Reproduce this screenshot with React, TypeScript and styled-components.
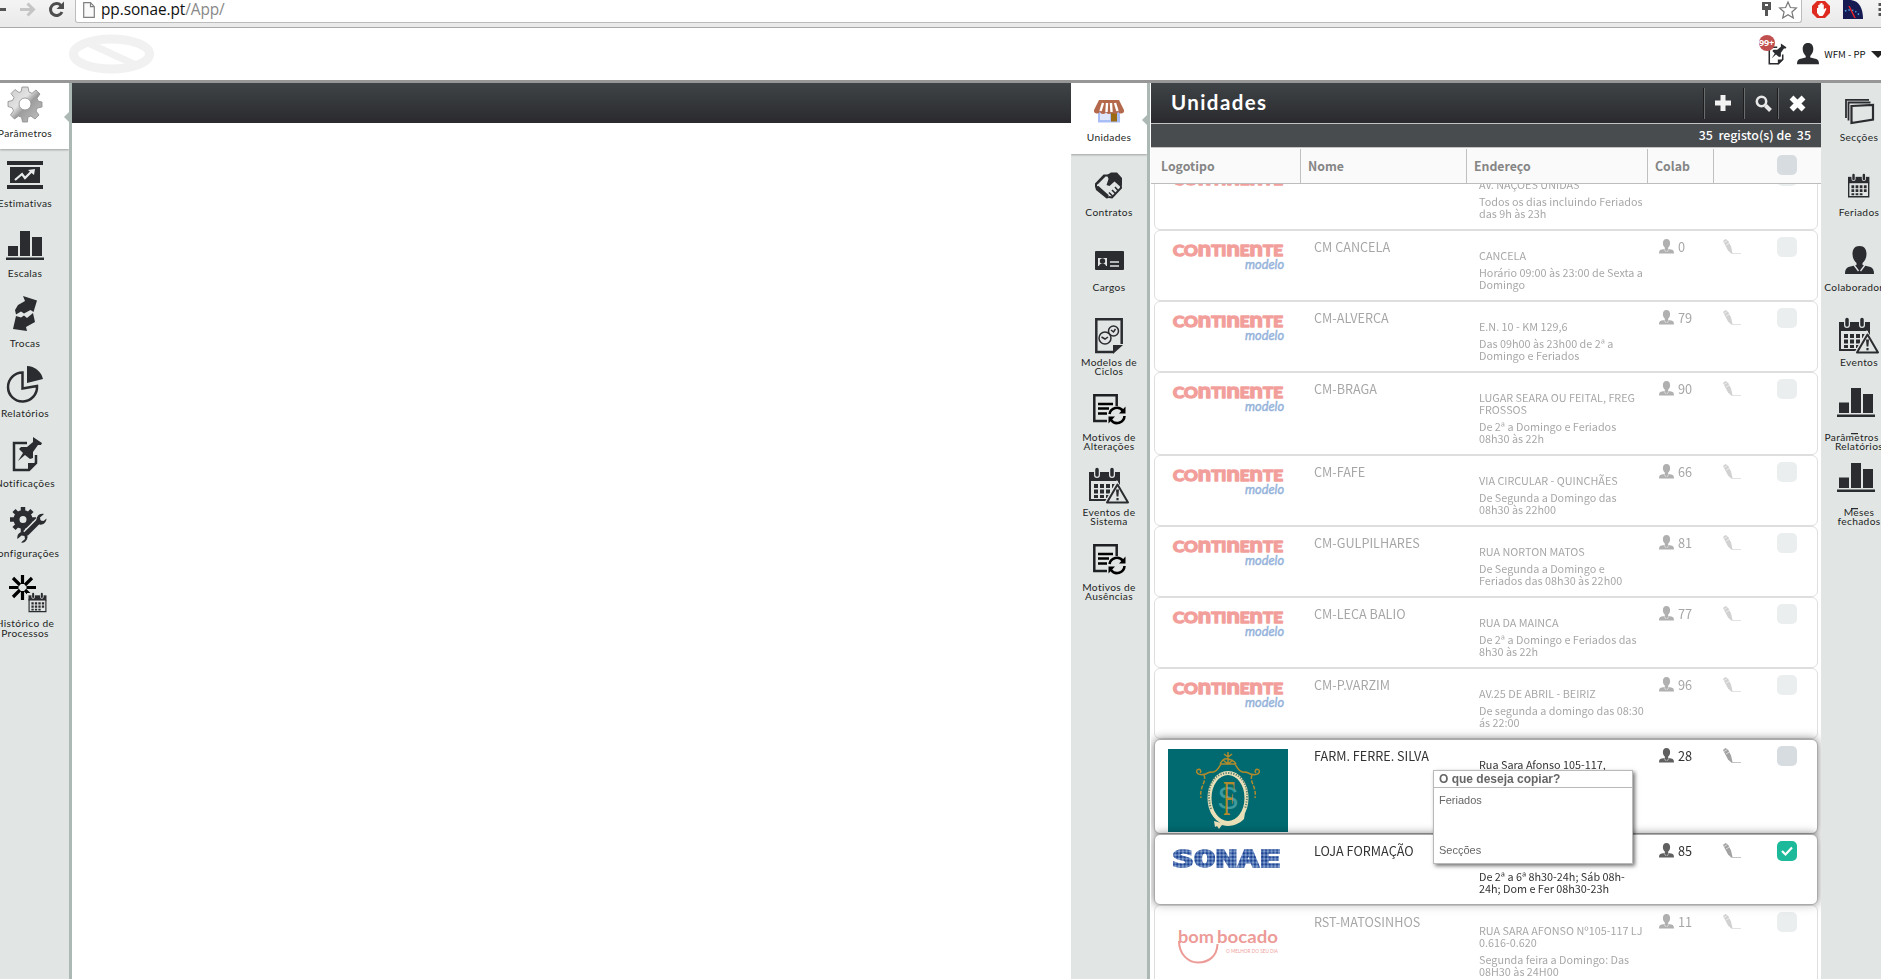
import React from "react";
import styled, { createGlobalStyle } from "styled-components";

const SOURCE = `"Noto Sans CJK SC", "Open Sans", sans-serif`;
const ROUND = `Lato, "Open Sans", sans-serif`;
const INK = "#2b2c30";

const GlobalStyle = createGlobalStyle`
  * { box-sizing: border-box; }
  body { margin: 0; background: #fff; font-family: ${SOURCE}; overflow: hidden; }
  svg { display: block; flex: none; overflow: visible; }
`;

const Page = styled.div`
  display: flex;
  flex-direction: column;
  width: 1881px;
  height: 979px;
  overflow: hidden;
`;

/* ---------- browser chrome ---------- */
const BrowserBar = styled.div`
  display: flex;
  align-items: flex-start;
  height: 28px;
  background: linear-gradient(#f4f4f4, #e9e9e9);
  border-bottom: 1px solid #a9a9a9;
`;
const NavButtons = styled.div`
  flex: none;
  width: 75px;
  height: 22px;
`;
const Omnibox = styled.div`
  display: flex;
  flex: none;
  align-items: center;
  width: 1727px;
  height: 23px;
  padding: 0 4px 3px 7px;
  background: #fff;
  border: 1px solid #bcbcbc;
  border-top: 0;
  border-radius: 0 0 3px 3px;
`;
const Url = styled.span`
  flex: 1;
  margin-left: 6px;
  padding-top: 1px;
  font: 15.4px/20px "Open Sans", sans-serif;
  letter-spacing: -0.08px;
  color: #888;
  b { font-weight: 400; color: #111; }
`;
const Extensions = styled.div`
  display: flex;
  flex: 1;
  gap: 13px;
  min-width: 0;
  padding-left: 10px;
`;

/* ---------- app header ---------- */
const Header = styled.header`
  display: flex;
  justify-content: space-between;
  height: 55px;
  background: #fff;
  border-bottom: 3px solid #979797;
`;
const LogoSlot = styled.div`
  padding: 6px 0 0 68px;
`;
const UserArea = styled.div`
  display: flex;
  align-items: center;
  width: 122px;
`;
const Bell = styled.div`
  position: relative;
  width: 40px;
  height: 52px;
  padding: 15px 0 0 6px;
`;
const Badge = styled.span`
  position: absolute;
  left: 0;
  top: 7px;
  width: 16px;
  height: 16px;
  border-radius: 8px;
  background: #c0504f;
  color: #fff;
  font: 700 9px/15px "Open Sans", sans-serif;
  letter-spacing: -0.2px;
  white-space: nowrap;
`;
const UserName = styled.span`
  width: 49px;
  margin-left: 5px;
  font: 9.600px/14px ${SOURCE};
  color: #111;
  white-space: nowrap;
`;

/* ---------- layout ---------- */
const Body = styled.div`
  display: flex;
  flex: 1;
  min-height: 0;
`;
const Work = styled.main`
  width: 999px;
  background: #fff;
`;
const DarkBar = styled.div`
  display: flex;
  align-items: center;
  height: 40px;
  background: linear-gradient(#3f4447, #2a2a2e);
`;

/* ---------- side menus ---------- */
const Menu = styled.nav<{ $w: number; $edge?: boolean }>`
  width: ${(p) => p.$w}px;
  overflow: hidden;
  background: #e1e6e4;
  border-right: ${(p) => (p.$edge ? "3px solid #abb8b4" : "0")};
`;
const MenuItem = styled.div<{ $h: number; $top: number; $active?: boolean }>`
  position: relative;
  display: flex;
  justify-content: center;
  height: ${(p) => p.$h}px;
  padding-top: ${(p) => p.$top}px;
  background: ${(p) => (p.$active ? "#fff" : "transparent")};
  box-shadow: ${(p) => (p.$active ? "0 1px 2px rgba(0,0,0,.3)" : "none")};
`;
const MenuInner = styled.div<{ $w: number; $shift: number; $gap: number; $lh: number }>`
  display: flex;
  flex: none;
  flex-direction: column;
  align-items: center;
  gap: ${(p) => p.$gap}px;
  width: ${(p) => p.$w}px;
  margin-left: ${(p) => p.$shift}px;
  font: 10.2px/${(p) => p.$lh}px ${ROUND};
  letter-spacing: 0.35px;
  color: #1e1f24;
  text-align: center;
  white-space: pre;
`;
const Notch = styled.i<{ $y: number }>`
  position: absolute;
  right: 0;
  top: ${(p) => p.$y}px;
  border: 5.5px solid transparent;
  border-right-color: #abb8b4;
  border-left: 0;
`;

/* ---------- units panel ---------- */
const Panel = styled.section`
  display: flex;
  flex-direction: column;
  width: 671px;
  padding-left: 1px;
  background: #fff;
`;
const Title = styled.h1`
  flex: 1;
  margin: 0;
  padding: 0 0 1px 20px;
  font: 700 20.5px/39px ${ROUND};
  letter-spacing: 1.4px;
  color: #fff;
`;
const Tool = styled.div<{ $w: number }>`
  display: flex;
  align-items: center;
  width: ${(p) => p.$w}px;
  height: 31px;
  padding-left: 10px;
  border-left: 1px solid #6a6c6e;
  box-shadow: -1px 0 #1d1d20;
`;
const Count = styled.div`
  height: 25px;
  padding-right: 10px;
  background: #484c4f;
  border: solid #c4c4c4;
  border-width: 1px 0;
  color: #fff;
  font: 500 12.4px/22px ${SOURCE};
  text-align: right;
  white-space: pre;
`;
const Columns = styled.div`
  display: grid;
  grid-template-columns: 150px 166px 181px 66px 1fr;
  height: 36px;
  padding-top: 1px;
  background: #fafafa;
  border-bottom: 1px solid #bdbdbd;
`;
const Column = styled.div`
  padding: 0 0 0 10px;
  border-right: 1px solid #c0c0c0;
  color: #858585;
  font: 700 12.3px/34px ${SOURCE};
  &:nth-child(n + 2) { padding-left: 7px; }
  &:last-child { padding: 6px 0 0 63px; border: 0; }
`;
const Rows = styled.div`
  flex: 1;
  min-height: 0;
  margin-top: -25px;
  padding: 0 3px;
  clip-path: inset(25px 0 0 0);
`;
const Row = styled.div<{ $h: number; $on?: boolean }>`
  position: relative;
  display: grid;
  grid-template-columns: 159px 165px 180px 64px 54px 1fr;
  height: ${(p) => p.$h}px;
  background: #fff;
  border: 1px solid ${(p) => (p.$on ? "#aaa" : "#bdbdbd")};
  border-radius: 6px;
  box-shadow: ${(p) => (p.$on ? "0 0 10px rgba(0,0,0,.5)" : "none")};
  opacity: ${(p) => (p.$on ? 1 : 0.5)};
  color: ${(p) => (p.$on ? "#333" : "#4c4c4c")};
`;
const LogoCell = styled.div`
  padding: 9px 0 0 13px;
`;
const NameCell = styled.div`
  padding-top: 7px;
  font: 12.65px/18px ${SOURCE};
  white-space: nowrap;
`;
const AddressCell = styled.div`
  padding-top: 18px;
  font: 10.82px/12px ${SOURCE};
  white-space: pre;
  p { margin: 0 0 5px; min-height: 12px; }
`;
const StaffCell = styled.div`
  display: flex;
  gap: 4px;
  padding-top: 8px;
  font: 12.75px/16px ${SOURCE};
`;
const IconCell = styled.div`
  padding-top: 8px;
`;
const CheckCell = styled.div`
  padding-top: 6px;
`;
const Check = styled.div<{ $on?: boolean }>`
  display: flex;
  align-items: center;
  justify-content: center;
  width: 20px;
  height: 20px;
  border-radius: 5px;
  background: ${(p) => (p.$on ? "#1cba9b" : "#d6dcdf")};
`;

/* ---------- popup ---------- */
const Popup = styled.div`
  position: absolute;
  z-index: 5;
  left: 1433px;
  top: 770px;
  width: 200px;
  height: 94px;
  background: #fff;
  border: 1px solid #b9b9b9;
  box-shadow: 2px 2px 4px rgba(0, 0, 0, 0.55);
  color: #666;
  font: 11px/14px "Liberation Sans", Arial, sans-serif;
`;
const PopupTitle = styled.div`
  height: 17px;
  padding-left: 5px;
  border-bottom: 1px solid #b9b9b9;
  font-weight: 700;
  font-size: 12px;
  line-height: 16px;
`;
const PopupOption = styled.div`
  height: 50px;
  padding: 5px;
`;

/* ---------- icons ---------- */
const Gear = () => (
  <svg width="36" height="36" viewBox="0 0 36 36">
    <defs>
      <linearGradient id="steel" x1="0" y1="0" x2="1" y2="1">
        <stop offset="0" stopColor="#c9c9c9" />
        <stop offset=".4" stopColor="#e3e3e3" />
        <stop offset=".55" stopColor="#9d9d9d" />
        <stop offset="1" stopColor="#c4c4c4" />
      </linearGradient>
    </defs>
    <g fill="url(#steel)" stroke="#8b8b8b" strokeWidth=".8">
      <path fillRule="evenodd" d="M15 1h6l1 5 3 1.3 4-3.300 4 4-3 4.200 1.300 3L35 16v5l-4.700 1-1.300 3 3 4-4 4-4.200-3-3 1.300L20.500 36h-5l-1-4.700-3-1.300-4 3-4-4 3-4.200-1.300-3L1 20.500v-5l4.500-1L7 11.500 4 7.500l4-4L12 6.500l2.200-1zM18 12a6 6 0 100 12 6 6 0 100-12z" />
    </g>
  </svg>
);
const Forecast = () => (
  <svg width="36" height="36" viewBox="0 0 36 36">
    <path fill={INK} d="M0 5h36v4H0zM0 29h36v4H0zM3 11h30v16H3z" />
    <path d="M8 24l7-6 3 4 7-7" fill="none" stroke="#e8ecec" strokeWidth="2.200" />
    <path fill="#e8ecec" d="M21 14l7-1-1 6z" />
  </svg>
);
const Bars = () => (
  <svg width="38" height="36" viewBox="0 0 38 36">
    <path fill={INK} d="M2 20h10v10H2zM14 5h10v25H14zM26 11h10v19H26zM0 31.500h38V34H0z" />
  </svg>
);
const ReportBars = () => (
  <svg width="42" height="36" viewBox="2 9 42 36">
    <path fill={INK} d="M3 18.500h10v10.500H3zM15 4h10v25H15zM27 10h10v19H27zM1 30.500h38V33H1zM15 49h7v1.200h-7z" />
  </svg>
);
const Swap = () => (
  <svg width="36" height="36" viewBox="0 0 36 36">
    <path fill={INK} d="M16 0l14 4.500-3.500 11.500-3-2L17 17.500l-3-2-5 3L8 14l3-5 7-4zM9 20l5 1.500 3-2 3 2.500 6-5 2 9-9 5 1 4-14-2z" />
  </svg>
);
const Pie = () => (
  <svg width="36" height="36" viewBox="0 0 36 36">
    <path fill="none" stroke={INK} strokeWidth="2.500" d="M15.500 6.500A14.500 14.500 0 1030 20l-14.500 2.500z" />
    <path fill={INK} d="M20 0a17 17 0 0116 13l-16 4z" />
  </svg>
);
const PinNote = ({ w = 36 }: { w?: number }) => (
  <svg width={w} height={w} viewBox="0 0 36 36">
    <path fill="none" stroke={INK} strokeWidth="2.500" d="M20 7H7v27h15l7-7V19" />
    <path fill={INK} d="M21 35v-8h9zM26 1l9 6-1 2-3 0-5 7 0 6-3 1-5-4-7 6 5-8-4-4 2-2 6 0 6-5z" />
  </svg>
);
const Wrench = () => (
  <svg width="32" height="36" viewBox="0 0 32 36">
    <path fill="none" stroke={INK} strokeWidth="6" d="M14 7a6.500 6.500 0 100 13 6.500 6.500 0 100-13z" />
    <path stroke={INK} strokeWidth="4.500" d="M14 1v4M14 22v4M1 13.500h4M23 13.500h4M5 4.500l3 3M23 4.500l-3 3M5 22.500l3-3" />
    <path stroke="#e1e6e4" strokeWidth="8" d="M17 28L31 14" />
    <path stroke={INK} strokeWidth="5" d="M17 28L31 14" />
    <path fill={INK} d="M35 8l-4 3.500.500 3 3 .5 3-2.500c0 4-4 7-7 6-3-2-4-5-2-8 1-2 3-3 6.500-2.500zM12 36.500l4-3.500-.5-3-3-.5-4 3.500c-1-5 3-8 7-7 3 2 4 5 2 8-1 2-3 3-5.500 2.500z" />
  </svg>
);
const CalendarShape = () => (
  <g>
    <path fill={INK} d="M0 4h31v9H0z" />
    <path fill="none" stroke={INK} strokeWidth="2" d="M1 10v22h29V12" />
    <path fill={INK} d="M5 16h4v4H5zM11 16h4v4h-4zM17 16h4v4h-4zM23 16h4v4h-4zM5 21.500h4v4H5zM11 21.500h4v4h-4zM17 21.500h4v4h-4zM23 21.500h4v4h-4zM5 27h4v3H5zM11 27h4v3h-4zM17 27h4v3h-4z" />
    <path stroke="#e1e6e4" strokeWidth="6" strokeLinecap="round" d="M8 2v5M23 2v5" />
    <path stroke={INK} strokeWidth="3.500" strokeLinecap="round" d="M8 1.500v5.500M23 1.500v5.500" />
  </g>
);
const History = () => (
  <svg width="32" height="36" viewBox="0 0 32 36">
    <path stroke="#000" strokeWidth="3.200" d="M13.500 -1v9M13.500 15v9M0 11.500h9.500M17.500 11.500H27M4 2l7 7M23 2l-7 7M4 21l7-7M23 21l-7-7" />
    <path fill="#e1e6e4" d="M18 17h20v20H18z" />
    <g transform="translate(19.500 17) scale(.58)">
      <CalendarShape />
    </g>
  </svg>
);
const Store = () => (
  <svg width="30" height="36" viewBox="0 0 30 36">
    <path fill="#a9bdf6" d="M4 17h22v12.500H4z" />
    <path fill="#dfe6fb" d="M6 20h10v7H6z" />
    <path fill="#9a6b12" d="M17 19.500h6v9h-6z" />
    <path fill="#b5694c" d="M5 7h20l5 10a3 3 0 01-6 1 3 3 0 01-6 0 3 3 0 01-6 0 3 3 0 01-6 0 3 3 0 01-6-1z" />
    <path stroke="#fff" strokeWidth="2.400" d="M9 10l-2.500 8M13 10l-.5 9M17 10l.5 9M21 10l2.500 8" />
  </svg>
);
const Handshake = () => (
  <svg width="28" height="36" viewBox="0 0 28 36">
    <path fill="none" stroke={INK} strokeWidth="2" d="M14 7.500H9L1 16v3M25.500 14l.5 6-9 9.500-3-.5" />
    <path fill={INK} d="M12 7l4-2.500h6l5 5.500V17l-2.500 1-5-4.500-5 4.500-3-1 2-6zM0 18.500l3.500-.5 10 9 .5 3-2.500.5L1 22z" />
    <path fill="none" stroke={INK} strokeWidth="1.600" d="M17 22l3.500 3.500M14 24.500l3.500 3.500M20 19l3 3.500M2 16l8-8" />
  </svg>
);
const IdCard = () => (
  <svg width="29" height="36" viewBox="0 0 29 36">
    <rect y="8" width="29" height="19" rx="1" fill={INK} />
    <path stroke="#e1e6e4" strokeWidth="1.400" d="M15 19h9M15 23h9" />
    <path fill="#e1e6e4" d="M3 15h9v8H3z" />
    <circle cx="7.500" cy="18" r="2.700" fill={INK} />
    <path fill={INK} d="M4 23c0-3.500 7-3.500 7 0z" />
  </svg>
);
const Cycles = () => (
  <svg width="28" height="36" viewBox="0 0 28 36">
    <path fill="none" stroke={INK} strokeWidth="2.500" d="M18 34H1.300V1.300h25.400V26" />
    <path fill={INK} d="M18 36v-9h10z" />
    <g fill="none" stroke={INK} strokeWidth="1.500">
      <circle cx="10" cy="20" r="6" />
      <circle cx="18.500" cy="13" r="5" />
      <path d="M6.500 19l3.500 2 3-2M16 12l2.500 2 2-3" />
    </g>
  </svg>
);
const Reasons = () => (
  <svg width="33" height="36" viewBox="0 1 33 36">
    <path fill="none" stroke="#1f2023" strokeWidth="2.500" d="M14 29H1.300V3.300h22.400V14" />
    <path stroke="#000" strokeWidth="2.500" d="M5 12h15M5 16.500h11M5 21.500h9" />
    <g fill="none" stroke="#000" strokeWidth="2.600">
      <path d="M16.500 22a7.500 7.500 0 0113.500-3M31.500 24a7.500 7.500 0 01-13.500 4" />
    </g>
    <path d="M32.500 14.500v7h-6.500zM15.500 31.500v-7H22z" />
  </svg>
);
const EventAlert = () => (
  <svg width="40" height="36" viewBox="0 0 40 36">
    <CalendarShape />
    <path fill="#e1e6e4" stroke="#e1e6e4" strokeWidth="5" d="M28 17l11 18H18z" />
    <path fill="#e1e6e4" stroke={INK} strokeWidth="2" strokeLinejoin="round" d="M28.500 16.500L39 34.500H18z" />
    <path fill={INK} d="M27 21.500h3l-.6 7h-1.800zM27.400 30h2.200v2.200h-2.200z" />
  </svg>
);
const Sections = () => (
  <svg width="29" height="36" viewBox="0 0 29 36">
    <g fill="none" stroke={INK} strokeWidth="1.800">
      <path d="M1 25V6.800h23M3.500 27.500V9.500h22" />
      <path strokeWidth="2.200" d="M6.500 13l21.500-1v14.500L6.500 30z" />
    </g>
  </svg>
);
const Calendar = () => (
  <svg width="23" height="36" viewBox="0 0 23 36">
    <g transform="translate(0 6) scale(.69 .71)">
      <CalendarShape />
    </g>
  </svg>
);
const Person = ({ w, fill = INK, tie }: { w: number; fill?: string; tie?: boolean }) => (
  <svg width={w} height={(w * 28) / 29} viewBox="0 0 29 28">
    <path fill={fill} d="M14.500 0c5 0 7 3.500 7 8s-2 7-4 9v2l8 2c2.500 1 3.500 3 3.500 7H0c0-4 1-6 3.500-7l8-2v-2c-2-2-4-4.500-4-9s2-8 7-8z" />
    {tie && <path fill="none" stroke="#e1e6e4" strokeWidth="1.300" d="M9 19l4.500 6M20 19l-4.500 6" />}
  </svg>
);
const PersonSlot = styled.div`
  display: flex;
  align-items: center;
  height: 36px;
  padding-bottom: 3px;
`;
const Pen = () => (
  <svg width="18" height="16" viewBox="0 0 18 16">
    <path fill="#a2a2a2" d="M0 2l2.500-2L5 1.500l3 6 1.500 6.500-1 .8L5 11.500z" />
    <path stroke="#fff" strokeWidth=".6" d="M1 3.500l3.500-2M3 6l3.500-2" />
    <path stroke="#c4c4c4" d="M8 14.500h10" />
  </svg>
);
const Tick = () => (
  <svg width="12" height="10" viewBox="0 0 12 10">
    <path d="M1 5l3.500 3.500L11 1.500" fill="none" stroke="#fff" strokeWidth="2.200" />
  </svg>
);

/* ---------- brand marks ---------- */
const Continente = ({ plain }: { plain?: boolean }) => (
  <svg width="120" height="40" viewBox="0 0 120 40">
    <text x="5" y="16" fill="#e53e37" stroke="#e53e37" strokeWidth="1.500" strokeLinejoin="round" fontFamily="Lato" fontWeight="700" fontSize="15.500" textLength="110" lengthAdjust="spacingAndGlyphs">
      CO<tspan fontSize="21.500">n</tspan>TI<tspan fontSize="21.500">n</tspan>E<tspan fontSize="21.500">n</tspan>TE
    </text>
    {!plain && (
      <text x="77" y="28.500" fill="#2a66b5" stroke="#2a66b5" strokeWidth=".5" fontFamily="Lato" fontStyle="italic" fontWeight="400" fontSize="13.500" textLength="39" lengthAdjust="spacingAndGlyphs">
        modelo
      </text>
    )}
  </svg>
);
const Sonae = () => (
  <svg width="120" height="40" viewBox="0 0 120 40">
    <defs>
      <pattern id="dots" width="3.700" height="3.700" patternUnits="userSpaceOnUse">
        <rect width="3.700" height="3.700" fill="#8fabd8" />
        <circle cx="1.850" cy="1.850" r="1.600" fill="#1c4391" />
      </pattern>
    </defs>
    <text x="4" y="23" fill="url(#dots)" stroke="url(#dots)" strokeWidth="1.600" fontFamily="DejaVu Sans Mono" fontWeight="700" fontSize="23" textLength="109" lengthAdjust="spacingAndGlyphs">
      SONAE
    </text>
  </svg>
);
const BomBocado = () => (
  <svg width="120" height="60" viewBox="0 0 120 60">
    <g fill="#d9362f" fontFamily="Lato">
      <text x="10" y="28" fontWeight="700" fontSize="17" textLength="36" lengthAdjust="spacingAndGlyphs">bom</text>
      <text x="49" y="28" fontWeight="700" fontSize="17" textLength="61" lengthAdjust="spacingAndGlyphs">bocado</text>
      <text x="58" y="38" fontSize="5.500" textLength="52" lengthAdjust="spacingAndGlyphs">O MELHOR DO SEU DIA</text>
    </g>
    <path d="M11 26c0 13 9 21.500 19 21.500S49 42 49.500 29" fill="none" stroke="#d9362f" strokeWidth="2" />
  </svg>
);
const Pharmacy = () => (
  <svg width="120" height="83" viewBox="0 0 120 83">
    <rect width="120" height="83" fill="#006a70" />
    <g fill="none" stroke="#b08a2c" strokeWidth="1.500">
      <path d="M60 3v11M56 5l4 3 4-3M52 15c2-4 5-6 8-5s6 1 8 5M55 11l5 4 5-4M42 23c6 1 8-3 11-8h14c3 5 5 9 11 8M42 23c-9 5-15 2-13-2 3-2 5 1 3 3M78 23c9 5 15 2 13-2-3-2-5 1-3 3" />
      <path d="M36 26c3 7-5 12-3 23M84 26c-3 7 5 12 3 23" strokeDasharray="4 1.500" />
    </g>
    <ellipse cx="60" cy="49" rx="18.500" ry="25" fill="none" stroke="#e9e0b8" strokeWidth="4" />
    <path d="M43 60C36 35 48 24 60 24s24 11 17 36" fill="none" stroke="#5d8272" strokeWidth="2" strokeDasharray="1.300 1.300" />
    <path fill="#e9e0b8" d="M46 72c12 4 22 2 31-8l-1 6c-7 7-15 8-22 6l-3 4-2-3-2 1z" />
    <text x="60" y="60" textAnchor="middle" fontFamily="Liberation Sans" fontSize="32" fill="#3f9a9d">S</text>
    <text x="55" y="66" fontFamily="Liberation Serif" fontSize="50" fill="#b08a2c" textLength="12" lengthAdjust="spacingAndGlyphs">F</text>
  </svg>
);

/* ---------- data ---------- */
type Entry = { label: string; icon: React.ReactNode };
const mainMenu: Entry[] = [
  { label: "Parâmetros", icon: <Gear /> },
  { label: "Estimativas", icon: <Forecast /> },
  { label: "Escalas", icon: <Bars /> },
  { label: "Trocas", icon: <Swap /> },
  { label: "Relatórios", icon: <Pie /> },
  { label: "Notificações", icon: <PinNote /> },
  { label: "Configurações", icon: <Wrench /> },
  { label: "Histórico de\nProcessos", icon: <History /> },
];
const paramMenu: Entry[] = [
  { label: "Unidades", icon: <Store /> },
  { label: "Contratos", icon: <Handshake /> },
  { label: "Cargos", icon: <IdCard /> },
  { label: "Modelos de\nCiclos", icon: <Cycles /> },
  { label: "Motivos de\nAlterações", icon: <Reasons /> },
  { label: "Eventos de\nSistema", icon: <EventAlert /> },
  { label: "Motivos de\nAusências", icon: <Reasons /> },
];
const unitMenu: Entry[] = [
  { label: "Secções", icon: <Sections /> },
  { label: "Feriados", icon: <Calendar /> },
  { label: "Colaboradores", icon: <PersonSlot><Person w={29} tie /></PersonSlot> },
  { label: "Eventos", icon: <EventAlert /> },
  { label: "Parâmetros de\nRelatórios", icon: <ReportBars /> },
  { label: "Meses\nfechados", icon: <ReportBars /> },
];

type Unit = { name: string; address: string; hours: string; staff: string; h: number; logo?: React.ReactNode; on?: boolean; checked?: boolean };
const units: Unit[] = [
  { name: "", address: "AV. NAÇÕES UNIDAS", hours: "Todos os dias incluindo Feriados\ndas 9h às 23h", staff: "", h: 71, logo: <Continente plain /> },
  { name: "CM CANCELA", address: "CANCELA", hours: "Horário 09:00 às 23:00 de Sexta a\nDomingo", staff: "0", h: 71 },
  { name: "CM-ALVERCA", address: "E.N. 10 - KM 129,6", hours: "Das 09h00 às 23h00 de 2ª a\nDomingo e Feriados", staff: "79", h: 71 },
  { name: "CM-BRAGA", address: "LUGAR SEARA OU FEITAL, FREG\nFROSSOS", hours: "De 2ª a Domingo e Feriados\n08h30 às 22h", staff: "90", h: 83 },
  { name: "CM-FAFE", address: "VIA CIRCULAR - QUINCHÃES", hours: "De Segunda a Domingo das\n08h30 às 22h00", staff: "66", h: 71 },
  { name: "CM-GULPILHARES", address: "RUA NORTON MATOS", hours: "De Segunda a Domingo e\nFeriados das 08h30 às 22h00", staff: "81", h: 71 },
  { name: "CM-LECA BALIO", address: "RUA DA MAINCA", hours: "De 2ª a Domingo e Feriados das\n8h30 às 22h", staff: "77", h: 71 },
  { name: "CM-P.VARZIM", address: "AV.25 DE ABRIL - BEIRIZ", hours: "De segunda a domingo das 08:30\nás 22:00", staff: "96", h: 71 },
  { name: "FARM. FERRE. SILVA", address: "Rua Sara Afonso 105-117,", hours: "", staff: "28", h: 95, logo: <Pharmacy />, on: true },
  { name: "LOJA FORMAÇÃO", address: "", hours: "De 2ª a 6ª 8h30-24h; Sáb 08h-\n24h; Dom e Fer 08h30-23h", staff: "85", h: 71, logo: <Sonae />, on: true, checked: true },
  { name: "RST-MATOSINHOS", address: "RUA SARA AFONSO Nº105-117 LJ\n0.616-0.620", hours: "Segunda feira a Domingo: Das\n08H30 às 24H00", staff: "11", h: 83, logo: <BomBocado /> },
];

export default function App() {
  return (
    <Page>
      <GlobalStyle />
      <BrowserBar>
        <NavButtons>
          <svg width="75" height="22" viewBox="0 0 75 22">
            <path d="M0 9.500h6" stroke="#555" strokeWidth="3" />
            <path d="M20 9.500h13M27.500 3.500l6 6-6 6" fill="none" stroke="#c5c5c5" strokeWidth="3" />
            <path d="M61 5.500A6 6 0 1062 12" fill="none" stroke="#4d4d4d" strokeWidth="3" />
            <path d="M64 1.500V9h-7.500z" fill="#4d4d4d" />
          </svg>
        </NavButtons>
        <Omnibox>
          <svg width="12" height="16" viewBox="0 0 12 16">
            <path d="M.7.700h6.800l3.800 4v10.600H.700zM7.500.700v4h3.800" fill="#fafafa" stroke="#808080" strokeWidth="1.200" />
          </svg>
          <Url><b>pp.sonae.pt</b>/App/</Url>
          <svg width="36" height="18" viewBox="0 0 36 18">
            <path fill="#555" fillRule="evenodd" d="M1 1h9v8H7v6H4V9H1zM4 3v2h3V3z" />
            <path d="M27 1l2.400 5.500 6 .5-4.500 4 1.400 6-5.300-3.200-5.300 3.200 1.400-6-4.500-4 6-.5z" fill="#fff" stroke="#777" strokeWidth="1.200" />
          </svg>
        </Omnibox>
        <Extensions>
          <svg width="18" height="19" viewBox="0 0 18 19">
            <path fill="#de2a1f" d="M5 1h8l5 5v7l-5 5H5l-5-5V6z" />
            <path fill="#fff" d="M5 8l1.200 0V5h1.400V3.500H9V3h1.400v1.500h1.400v5L13.500 8l1 .8L12 14l-1.500 2H7.500L5 13z" />
          </svg>
          <svg width="20" height="19" viewBox="0 0 20 19">
            <path fill="#151a52" d="M0 0h8c8 1 12 8 12 19H0z" />
            <path d="M2 11A11 11 0 0116 15" fill="none" stroke="#4fa4e8" strokeWidth="1.500" strokeDasharray="1.500 2" />
            <path d="M6 6l6 12" stroke="#e5262b" strokeWidth="1.500" />
          </svg>
          <svg width="8" height="19" viewBox="0 0 8 19">
            <path fill="#555" d="M2.500 3h4v3h-4zM2.500 8h4v3h-4zM2.500 13h4v3h-4z" />
          </svg>
        </Extensions>
      </BrowserBar>

      <Header>
        <LogoSlot>
          <svg width="88" height="40" viewBox="0 0 88 40">
            <ellipse cx="43.500" cy="20" rx="38" ry="15" fill="none" stroke="#f1f1f1" strokeWidth="9" />
            <path d="M18 8l52 24" stroke="#f1f1f1" strokeWidth="7" />
          </svg>
        </LogoSlot>
        <UserArea>
          <Bell>
            <PinNote w={22} />
            <Badge>99+</Badge>
          </Bell>
          <Person w={22} />
          <UserName>WFM - PP</UserName>
          <svg width="10" height="7" viewBox="0 0 10 7">
            <path fill="#222" d="M0 0h14L7 7z" />
          </svg>
        </UserArea>
      </Header>

      <Body>
        <Menu $w={72} $edge>
          {mainMenu.map((m, i) => (
            <MenuItem key={m.label} $h={i ? 70 : 66} $top={i ? 7 : 3} $active={!i}>
              <MenuInner $w={90} $shift={-19} $gap={6} $lh={10}>
                {m.icon}
                {m.label}
              </MenuInner>
              {!i && <Notch $y={29} />}
            </MenuItem>
          ))}
        </Menu>
        <Work>
          <DarkBar />
        </Work>
        <Menu $w={79} $edge>
          {paramMenu.map((m, i) => (
            <MenuItem key={m.label} $h={i ? 75 : 71} $top={i ? 14 : 10} $active={!i}>
              <MenuInner $w={76} $shift={0} $gap={4} $lh={9}>
                {m.icon}
                {m.label}
              </MenuInner>
              {!i && <Notch $y={32} />}
            </MenuItem>
          ))}
        </Menu>
        <Panel>
          <DarkBar>
            <Title>Unidades</Title>
            <Tool $w={40}>
              <svg width="16" height="16" viewBox="0 0 16 16">
                <path fill="#f2f2f2" d="M5.500 0h5v5.500H16v5h-5.500V16h-5v-5.500H0v-5h5.500z" />
              </svg>
            </Tool>
            <Tool $w={34}>
              <svg width="17" height="17" viewBox="0 0 17 17">
                <circle cx="6.500" cy="6.500" r="4.700" fill="none" stroke="#e8e8e8" strokeWidth="2.500" />
                <path d="M10.500 10.500l5 5" stroke="#e8e8e8" strokeWidth="4" />
              </svg>
            </Tool>
            <Tool $w={43}>
              <svg width="17" height="17" viewBox="0 0 17 17">
                <path d="M2.500 2.500l12 12M14.500 2.500l-12 12" stroke="#fff" strokeWidth="5.500" />
              </svg>
            </Tool>
          </DarkBar>
          <Count>35  registo(s) de  35</Count>
          <Columns>
            <Column>Logotipo</Column>
            <Column>Nome</Column>
            <Column>Endereço</Column>
            <Column>Colab</Column>
            <Column><Check /></Column>
          </Columns>
          <Rows>
            {units.map((u) => (
              <Row key={u.address + u.name} $h={u.h} $on={u.on}>
                <LogoCell>{u.logo ?? <Continente />}</LogoCell>
                <NameCell>{u.name}</NameCell>
                <AddressCell>
                  <p>{u.address}</p>
                  <p>{u.hours}</p>
                </AddressCell>
                <StaffCell>
                  <Person w={15} fill="#606060" tie />
                  {u.staff}
                </StaffCell>
                <IconCell><Pen /></IconCell>
                <CheckCell><Check $on={u.checked}>{u.checked && <Tick />}</Check></CheckCell>
              </Row>
            ))}
          </Rows>
        </Panel>
        <Menu $w={60}>
          {unitMenu.map((m, i) => (
            <MenuItem key={m.label} $h={i ? 75 : 71} $top={i ? 14 : 10}>
              <MenuInner $w={76} $shift={16} $gap={4} $lh={9}>
                {m.icon}
                {m.label}
              </MenuInner>
            </MenuItem>
          ))}
        </Menu>
      </Body>

      <Popup>
        <PopupTitle>O que deseja copiar?</PopupTitle>
        <PopupOption>Feriados</PopupOption>
        <PopupOption>Secções</PopupOption>
      </Popup>
    </Page>
  );
}
